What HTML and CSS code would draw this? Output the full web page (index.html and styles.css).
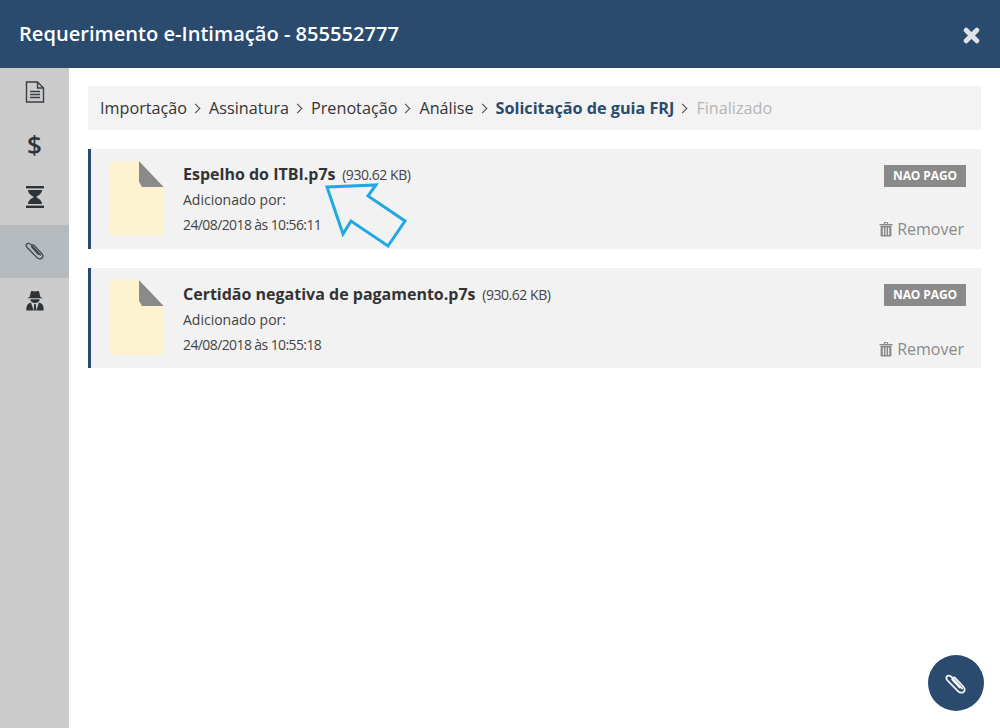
FILE: index.html
```html
<!DOCTYPE html>
<html lang="pt-BR">
<head>
    <meta charset="UTF-8">
    <meta name="viewport" content="width=device-width, initial-scale=1.0">
    <title>Requerimento e-Intimação</title>
    <link rel="stylesheet" href="styles.css">
</head>
<body>

    <header class="topbar">
        <h1>Requerimento e-Intimação - 855552777</h1>
        <svg class="close" width="17" height="17" viewBox="0 0 16 16">
            <path d="M3 3 L13 13 M13 3 L3 13" stroke="#dfe2e5" stroke-width="4.6" stroke-linecap="round"/>
        </svg>
    </header>

    <div class="layout">
        <nav class="sidebar">
            <div class="side-item">
                <svg width="20" height="22" viewBox="0 0 20 22" fill="none" stroke="#3a3f45" stroke-width="1.4">
                    <path d="M1.5 1 H12.5 L18.5 7 V21 H1.5 Z"/>
                    <path d="M12.5 1 V7 H18.5"/>
                    <path d="M5 10.5 H15 M5 13.5 H15 M5 16.5 H15" stroke-width="1.5"/>
                </svg>
            </div>
            <div class="side-item"><span class="dollar">$</span></div>
            <div class="side-item">
                <svg width="20" height="22" viewBox="0 0 20 22" fill="#2e3338">
                    <rect x="1" y="0" width="18" height="2.4"/>
                    <rect x="1" y="19.6" width="18" height="2.4"/>
                    <path d="M3 4 H17 C17 8 13 9.5 11.2 11 C13 12.5 17 14 17 18 H3 C3 14 7 12.5 8.8 11 C7 9.5 3 8 3 4 Z"/>
                </svg>
            </div>
            <div class="side-item active">
                <svg width="20" height="20" viewBox="0 0 20 20" fill="none" stroke="#3f444a" stroke-width="1.3" stroke-linecap="round">
                    <path d="M15.5 15 L6 4.6 C4.6 3 2.6 3 1.8 4 C1 5 1.2 6.6 2.4 7.8 L12 17.6 C13.6 19.2 15.8 19.2 17 18 C18.2 16.8 18 15 16.8 13.6 L9.4 5.6 C8.6 4.8 7.6 4.8 7 5.4 C6.4 6 6.6 7 7.2 7.6 L13.4 14.2"/>
                </svg>
            </div>
            <div class="side-item spy">
                <svg width="18" height="21" viewBox="0 0 18 21" fill="#2e3338">
                    <path d="M3.6 7 L5 1.2 C6.3 0.6 7.6 1.2 9 1.4 C10.4 1.2 11.7 0.6 13 1.2 L14.4 7 L17 8.2 H1 Z"/>
                    <path d="M4.4 9.2 H13.6 C13.6 11.8 11.6 13 9 13 C6.4 13 4.4 11.8 4.4 9.2 Z"/>
                    <path d="M0.4 20.6 C0 16 1.6 13.4 5 12.6 L7.6 20.6 Z M17.6 20.6 C18 16 16.4 13.4 13 12.6 L10.4 20.6 Z"/>
                    <path d="M8.2 14 H9.8 L10.3 20.6 H7.7 Z"/>
                </svg>
            </div>
        </nav>

        <main class="content">
            <ol class="steps">
                <li>Importação</li>
                <li>Assinatura</li>
                <li>Prenotação</li>
                <li>Análise</li>
                <li class="current">Solicitação de guia FRJ</li>
                <li class="todo">Finalizado</li>
            </ol>

            <div class="file-card">
                <div class="file-icon"></div>
                <div class="file-info">
                    <p class="file-name"><strong>Espelho do ITBI.p7s</strong> <span>(930.62 KB)</span></p>
                    <p>Adicionado por:</p>
                    <p class="file-date">24/08/2018 às 10:56:11</p>
                </div>
                <div class="file-side">
                    <span class="badge">NAO PAGO</span>
                    <span class="remove">
                        <svg width="14" height="16" viewBox="0 0 14 16" fill="#8a8a8a">
                            <path d="M0.5 3 H13.5 V4.4 H0.5 Z M4.6 3 L5.2 1 H8.8 L9.4 3 H8.2 L7.9 2 H6.1 L5.8 3 Z"/>
                            <path fill-rule="evenodd" d="M1.6 5 H12.4 V14.4 C12.4 15.2 11.9 15.6 11.2 15.6 H2.8 C2.1 15.6 1.6 15.2 1.6 14.4 Z M3.8 6.4 V14 H4.9 V6.4 Z M6.45 6.4 V14 H7.55 V6.4 Z M9.1 6.4 V14 H10.2 V6.4 Z"/>
                        </svg>
                        Remover
                    </span>
                </div>
                <svg class="pointer" width="90" height="70" viewBox="0 0 90 70" fill="none" stroke="#1fa8e1" stroke-width="3" stroke-linejoin="miter">
                    <path d="M2 4 L51 2 L43 13 L80 38 L63 63 L26 38 L18 51 Z"/>
                </svg>
            </div>

            <div class="file-card">
                <div class="file-icon"></div>
                <div class="file-info">
                    <p class="file-name"><strong>Certidão negativa de pagamento.p7s</strong> <span>(930.62 KB)</span></p>
                    <p>Adicionado por:</p>
                    <p class="file-date">24/08/2018 às 10:55:18</p>
                </div>
                <div class="file-side">
                    <span class="badge">NAO PAGO</span>
                    <span class="remove">
                        <svg width="14" height="16" viewBox="0 0 14 16" fill="#8a8a8a">
                            <path d="M0.5 3 H13.5 V4.4 H0.5 Z M4.6 3 L5.2 1 H8.8 L9.4 3 H8.2 L7.9 2 H6.1 L5.8 3 Z"/>
                            <path fill-rule="evenodd" d="M1.6 5 H12.4 V14.4 C12.4 15.2 11.9 15.6 11.2 15.6 H2.8 C2.1 15.6 1.6 15.2 1.6 14.4 Z M3.8 6.4 V14 H4.9 V6.4 Z M6.45 6.4 V14 H7.55 V6.4 Z M9.1 6.4 V14 H10.2 V6.4 Z"/>
                        </svg>
                        Remover
                    </span>
                </div>
            </div>
        </main>
    </div>

    <button class="fab">
        <svg width="22" height="22" viewBox="0 0 20 20" fill="none" stroke="#f2f4f6" stroke-width="1.6" stroke-linecap="round">
            <path d="M15.5 15 L6 4.6 C4.6 3 2.6 3 1.8 4 C1 5 1.2 6.6 2.4 7.8 L12 17.6 C13.6 19.2 15.8 19.2 17 18 C18.2 16.8 18 15 16.8 13.6 L9.4 5.6 C8.6 4.8 7.6 4.8 7 5.4 C6.4 6 6.6 7 7.2 7.6 L13.4 14.2"/>
        </svg>
    </button>

</body>
</html>
```

FILE: styles.css
```css
* {
    box-sizing: border-box;
}

html,
body {
    height: 100%;
}

body {
    font-family: 'Open Sans', 'Liberation Sans', sans-serif;
    background-color: #ffffff;
    color: #333;
    margin: 0;
    display: flex;
    flex-direction: column;
    overflow: hidden;
}

.topbar {
    height: 68px;
    flex-shrink: 0;
    background-color: #2a4a6e;
    color: #fff;
    display: flex;
    align-items: center;
    justify-content: space-between;
    padding: 0 20px 0 19px;
}

.topbar h1 {
    margin: 0 0 2px;
    font-size: 20.1px;
    font-weight: 600;
}

.close {
    margin-top: 2px;
}

.layout {
    flex: 1;
    display: flex;
}

.sidebar {
    width: 69px;
    flex-shrink: 0;
    background-color: #cccccc;
}

.side-item {
    height: 52.4px;
    display: flex;
    align-items: center;
    justify-content: center;
    padding-bottom: 4px;
}

.side-item.active {
    background-color: #b5babe;
    padding-bottom: 2px;
}

.side-item.spy {
    padding-bottom: 6px;
}

.dollar {
    font-size: 26px;
    font-weight: 600;
    line-height: 30px;
    margin-top: -1px;
    color: #2e3338;
}

.content {
    flex: 1;
    padding: 18px 19px 0;
}

.steps {
    list-style: none;
    margin: 0 0 19px;
    padding: 0 12px;
    height: 44px;
    background-color: #f3f3f3;
    display: flex;
    align-items: center;
    font-size: 16.2px;
    color: #333;
}

.steps li::after {
    content: "";
    display: inline-block;
    width: 6px;
    height: 6px;
    border-top: 1px solid #444;
    border-right: 1px solid #444;
    transform: rotate(45deg);
    margin: 0 10px 2px 5px;
}

.steps li:last-child::after {
    display: none;
}

.steps .current {
    font-weight: 700;
    color: #2a4a6e;
}

.steps .todo {
    color: #b5b5b5;
}

.file-card {
    position: relative;
    height: 100px;
    margin-bottom: 19px;
    background-color: #f2f2f2;
    border-left: 3px solid #2a4a6e;
    display: flex;
    padding: 12px 15px 0 18px;
}

.file-icon {
    position: relative;
    width: 55px;
    height: 75px;
    background-color: #fcf2cf;
    border-radius: 5px;
    clip-path: polygon(0 0, 55% 0, 100% 35%, 100% 100%, 0 100%);
}

.file-icon::after {
    content: "";
    position: absolute;
    top: 0;
    right: 0;
    width: 25px;
    height: 26px;
    background-color: #8a8a8a;
    clip-path: polygon(0 0, 100% 100%, 12% 100%, 0 80%);
}

.file-info {
    flex: 1;
    margin-left: 19px;
    padding-top: 4px;
    font-size: 14px;
    color: #444;
}

.file-card + .file-card .file-info {
    padding-top: 5px;
}

.file-card + .file-card .file-side {
    padding-bottom: 8px;
}

.file-info p {
    margin: 0 0 6px;
    line-height: 19px;
}

.file-name strong {
    font-size: 16px;
    color: #333;
}

.file-name span {
    margin-left: 3px;
    letter-spacing: -0.45px;
}

.file-info .file-date {
    letter-spacing: -0.6px;
}

.file-side {
    display: flex;
    flex-direction: column;
    align-items: flex-end;
    justify-content: space-between;
    padding: 4px 0 9px;
}

.badge {
    background-color: #8a8a8a;
    color: #fff;
    font-size: 12px;
    font-weight: 700;
    padding: 3px 9px;
    line-height: 16px;
    letter-spacing: -0.1px;
}

.remove {
    display: flex;
    align-items: center;
    gap: 4px;
    font-size: 16px;
    color: #8a8a8a;
    margin-right: 2px;
}

.pointer {
    position: absolute;
    left: 234px;
    top: 34px;
}

.fab {
    position: absolute;
    right: 16px;
    bottom: 17px;
    width: 56px;
    height: 56px;
    border: none;
    border-radius: 50%;
    background-color: #2a4a6e;
    display: flex;
    align-items: center;
    justify-content: center;
    padding: 0;
}
```
